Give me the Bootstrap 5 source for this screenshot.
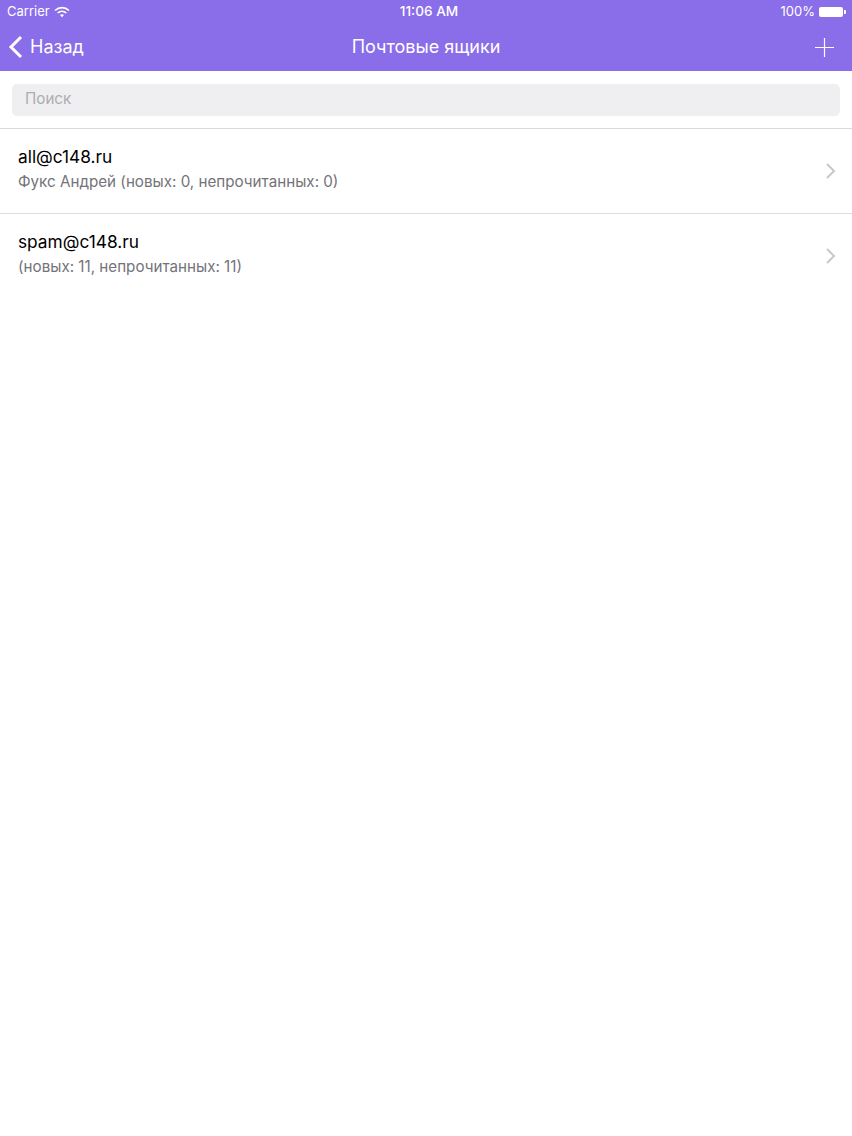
<!DOCTYPE html>
<html>
<head>
  <meta charset="UTF-8">
  <title>Почтовые ящики</title>
  <link href="https://cdn.jsdelivr.net/npm/bootstrap@5.3.2/dist/css/bootstrap.min.css" rel="stylesheet">
  <style>
    body { background: #fff; font-family: Inter, "Open Sans", "Liberation Sans", sans-serif; }
    .top-area { background: #8a6de9; height: 71px; color: #fff; }
    .status-row { height: 23px; padding: 0 6px 0 7px; font-size: 13px; line-height: 23px; }
    .status-side { width: 200px; }
    .status-time { font-weight: 500; font-size: 13.6px; margin-left: 5px; }
    .batt-shell { width: 24px; height: 10px; border-radius: 2px; background: #fff; }
    .batt-tip { width: 2px; height: 4px; background: #fff; border-radius: 0 1px 1px 0; margin-left: 1px; }
    .title-row { height: 47px; padding: 0 18px 0 8px; }
    .side-box { width: 200px; }
    .back-link { color: #fff; font-size: 18px; gap: 7px; text-decoration: none; }
    .title-text { font-size: 18px; margin-left: 10px; }
    .plus-icon { margin-top: 1px; }
    .search-area { height: 58px; padding: 13px 12px 0; border-bottom: 1px solid #d9d9dc; }
    .search-box { height: 32px; border-radius: 5px; background: #efeef0; color: #adadb1; font-size: 15.2px; padding: 0 13px; line-height: 30px; }
    .mail-row { height: 84.5px; padding: 0 16px 2px 18px; border-bottom: 1px solid #dedee0; border-radius: 0; }
    .mail-name { font-size: 17.3px; line-height: 20px; color: #000; margin-bottom: 5px; }
    .mail-info { font-size: 15.2px; line-height: 20px; color: #737378; }
    .mail-arrow { margin-top: 2px; }
  </style>
</head>
<body>
  <div class="top-area">
    <div class="status-row d-flex align-items-center justify-content-between">
      <div class="status-side d-flex align-items-center gap-1">
        <span>Carrier</span>
        <svg width="16" height="12" viewBox="0 0 16 12" fill="none" stroke="#fff" stroke-width="1.6">
          <path d="M1 4.5c4-3.8 10-3.8 14 0"/>
          <path d="M3.6 7c2.6-2.3 6.2-2.3 8.8 0"/>
          <path d="M8 11.2 6 9c1.2-.9 2.8-.9 4 0z" fill="#fff" stroke="none"/>
        </svg>
      </div>
      <div class="status-time">11:06 AM</div>
      <div class="status-side d-flex align-items-center justify-content-end">
        <span class="me-1">100%</span>
        <div class="batt-shell"></div>
        <div class="batt-tip"></div>
      </div>
    </div>
    <div class="title-row d-flex align-items-center justify-content-between">
      <a class="side-box back-link d-flex align-items-center" href="#">
        <svg width="15" height="24" viewBox="0 0 15 24" fill="none" stroke="#fff" stroke-width="3">
          <path d="M13 2 3 12l10 10"/>
        </svg>
        <span>Назад</span>
      </a>
      <div class="title-text">Почтовые ящики</div>
      <div class="side-box d-flex justify-content-end">
        <svg class="plus-icon" width="19" height="19" viewBox="0 0 19 19" stroke="#fff" stroke-width="1.2">
          <path d="M0 9.5h19M9.5 0v19"/>
        </svg>
      </div>
    </div>
  </div>

  <div class="search-area">
    <div class="search-box">Поиск</div>
  </div>

  <div class="list-group list-group-flush">
    <a class="list-group-item mail-row d-flex align-items-center justify-content-between" href="#">
      <div>
        <div class="mail-name">all@c148.ru</div>
        <div class="mail-info">Фукс Андрей (новых: 0, непрочитанных: 0)</div>
      </div>
      <svg class="mail-arrow" width="10" height="16" viewBox="0 0 10 16" fill="none" stroke="#c8c8cc" stroke-width="2"><path d="M1 1l7 7-7 7"/></svg>
    </a>
    <a class="list-group-item mail-row d-flex align-items-center justify-content-between" href="#">
      <div>
        <div class="mail-name">spam@c148.ru</div>
        <div class="mail-info">(новых: 11, непрочитанных: 11)</div>
      </div>
      <svg class="mail-arrow" width="10" height="16" viewBox="0 0 10 16" fill="none" stroke="#c8c8cc" stroke-width="2"><path d="M1 1l7 7-7 7"/></svg>
    </a>
  </div>
  <script src="https://cdn.jsdelivr.net/npm/bootstrap@5.3.2/dist/js/bootstrap.bundle.min.js"></script>
</body>
</html>
